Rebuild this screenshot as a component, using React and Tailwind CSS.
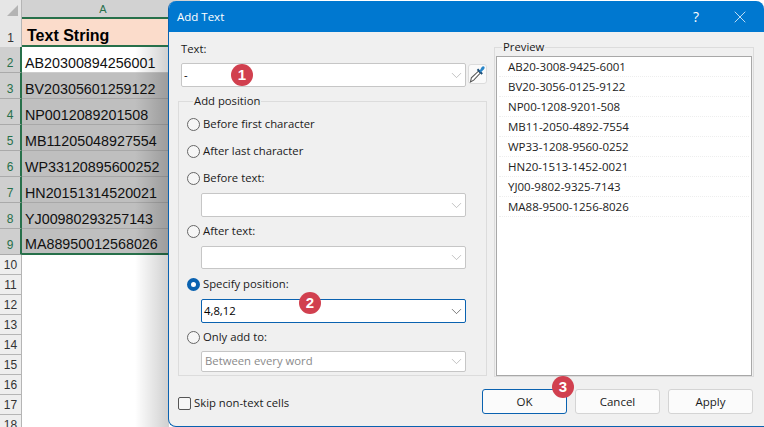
import { ChevronDown, X } from 'lucide-react'

const CELLS = ['AB20300894256001', 'BV20305601259122', 'NP0012089201508', 'MB11205048927554', 'WP33120895600252', 'HN20151314520021', 'YJ00980293257143', 'MA88950012568026']
const PREVIEW = ['AB20-3008-9425-6001', 'BV20-3056-0125-9122', 'NP00-1208-9201-508', 'MB11-2050-4892-7554', 'WP33-1208-9560-0252', 'HN20-1513-1452-0021', 'YJ00-9802-9325-7143', 'MA88-9500-1256-8026']
const EMPTY_ROWS = [10, 11, 12, 13, 14, 15, 16, 17, 18]

function Badge({ n, className }) {
  return (
    <span className={`absolute z-10 flex h-[22px] w-[22px] items-center justify-center rounded-full bg-[#d1404f] text-[15px] font-bold text-white font-['Liberation_Sans',sans-serif] ${className}`}>
      {n}
    </span>
  )
}

function Radio({ label, checked, className = '' }) {
  return (
    <label className={`flex h-[16px] items-center gap-[3px] ${className}`}>
      {checked
        ? <span className="h-[13px] w-[13px] rounded-full border-[4px] border-[#0a62b0] bg-white" />
        : <span className="h-[13px] w-[13px] rounded-full border border-[#666] bg-[#f6f6f6]" />}
      <span>{label}</span>
    </label>
  )
}

function Combo({ value, className = '', active, muted }) {
  return (
    <div className={`flex items-center justify-between rounded-[2px] border bg-white pl-[2px] ${active ? 'border-[#0a62b0]' : 'border-[#c6c6c6]'} ${className}`}>
      <span className={muted ? 'pl-[1px] text-[#8a8a8a]' : 'text-black'}>{value}</span>
      <ChevronDown size={17} strokeWidth={0.9} className={active ? 'text-[#333]' : 'text-[#a0a0a0]'} />
    </div>
  )
}

function DialogButton({ label, primary }) {
  return (
    <button className={`h-[25px] w-[85px] rounded-[3px] border bg-[#fbfbfb] text-[11.5px] ${primary ? 'border-[#0a62b0]' : 'border-[#d4d4d4]'}`}>
      {label}
    </button>
  )
}

function Dropper() {
  return (
    <svg width="19" height="20" viewBox="0 0 18 20" fill="none">
      <path d="M1.5 18.5 L2.5 14 L10 7 L12 9 L5 16.5 Z" fill="#fff" stroke="#555" strokeWidth="1.1" />
      <path d="M9 5 L14 10" stroke="#1b4f7a" strokeWidth="2" />
      <path d="M11 7 L13.5 2.5 Q15 1 16.3 2.2 Q17.2 3.5 15.8 5 L12.5 8.5 Z" fill="#2a86c8" />
    </svg>
  )
}

export default function App() {
  return (
    <div className="relative h-[427px] w-[764px] overflow-hidden bg-white font-['Liberation_Sans',sans-serif]">
      {/* sheet behind the dialog */}
      <div className="w-[200px]">
        <div className="flex h-[19px] bg-[#e6e6e6]">
          <div className="relative w-[22px] border-r border-[#b5b5b5]">
            <span className="absolute bottom-[3px] right-[3px] h-0 w-0 border-b-[11px] border-l-[11px] border-b-[#b4b4b4] border-l-transparent" />
          </div>
          <div className="flex flex-1 justify-center border-b-2 border-[#27704a] bg-[#d2d2d2] pr-[16px] text-[11px] leading-[18px] text-[#27704a]">A</div>
        </div>
        <div className="flex h-[28px]">
          <div className="flex w-[22px] items-end justify-center border-r border-[#b5b5b5] bg-[#e6e6e6] text-[12px] text-[#333]">1</div>
          <div className="flex-1 border-b-2 border-[#27704a] bg-[#fbdccb] pl-[5px] pt-[8px] text-[16px] font-bold leading-[18px] text-black">Text String</div>
        </div>
        {CELLS.map((c, i) => (
          <div key={c} className="flex h-[26px]">
            <div className="flex w-[22px] items-end justify-center border-b border-r-2 border-b-[#aaa] border-r-[#27704a] bg-[#cfcfcf] pb-[1px] text-[12px] leading-[16px] text-[#27704a]">{i + 2}</div>
            <div className={`flex flex-1 items-end border-b pl-[3px] text-[14.3px] leading-[17px] text-[#111] ${i === 0 ? 'border-b-[#ccc] bg-white' : i === 7 ? 'border-b-2 border-b-[#27704a] bg-[#bfbfbf]' : 'border-b-[#a8a8a8] bg-[#bfbfbf]'}`}>{c}</div>
          </div>
        ))}
        {EMPTY_ROWS.map(n => (
          <div key={n} className="flex h-[20px]">
            <div className="flex w-[22px] items-center justify-center border-b border-r border-[#b5b5b5] bg-[#eeeeee] text-[12px] text-[#333]">{n}</div>
            <div className="flex-1 bg-white" />
          </div>
        ))}
      </div>
      <div className="absolute left-[135px] top-[47px] h-[380px] w-[34px] bg-gradient-to-r from-transparent to-[#00000030]" />

      {/* Add Text dialog */}
      <div className="absolute left-[168px] top-[1px] h-[426px] w-[596px] overflow-hidden rounded-t-[8px] rounded-bl-[8px] border-b border-l border-[#0a62b0] bg-[#f0f0f0] font-['Open_Sans',sans-serif] text-[11.3px] text-[#1a1a1a]">
        <div className="flex h-[31px] items-center justify-between bg-[#0078d0] pl-[8px] pr-[14px] text-[11.5px] text-white">
          <span>Add Text</span>
          <div className="flex items-center gap-[31px]">
            <span className="text-[14px]">?</span>
            <X size={20} strokeWidth={0.9} />
          </div>
        </div>

        <div className="flex pl-[9px] pr-[10px] pt-[8px]">
          <div className="w-[309px]">
            <div className="pl-[3px] leading-[17px]">Text:</div>
            <div className="relative mt-[6px] flex gap-[2px] pl-[3px]">
              <Combo value="-" className="h-[24px] w-[285px] border-[#8c8c8c]" />
              <Badge n="1" className="left-[53px] top-[1px]" />
              <div className="mt-[1px] flex h-[20px] w-[19px] items-center justify-center rounded-[3px] border border-[#dcdcdc] bg-[#fafafa]">
                <Dropper />
              </div>
            </div>

            <fieldset className="relative mt-[7px] h-[282px] border border-[#dcdcdc] pl-[8px] pt-[8px]">
              <legend className="ml-[6px] px-[1px] leading-[14px]">Add position</legend>
              <Radio label="Before first character" />
              <Radio label="After last character" className="mt-[11px]" />
              <Radio label="Before text:" className="mt-[11px]" />
              <Combo value="" className="ml-[14px] mt-[7px] h-[24px] w-[265px]" />
              <Radio label="After text:" className="mt-[6px]" />
              <Combo value="" className="ml-[14px] mt-[7px] h-[23px] w-[265px]" />
              <Radio label="Specify position:" checked className="mt-[7px]" />
              <Combo value="4,8,12" active className="ml-[14px] mt-[7px] h-[24px] w-[265px]" />
              <Badge n="2" className="left-[120px] top-[184px]" />
              <Radio label="Only add to:" className="mt-[6px]" />
              <Combo value="Between every word" muted className="ml-[14px] mt-[6px] h-[21px] w-[265px]" />
            </fieldset>
          </div>

          <div className="ml-[7px] flex-1">
            <fieldset className="h-[337px] border border-[#dcdcdc] px-[1px]">
              <legend className="ml-[6px] px-[1px] leading-[14px]">Preview</legend>
              <div className="mt-[2px] h-[320px] border border-[#a8a8a8] bg-white">
                {PREVIEW.map(p => (
                  <div key={p} className="mx-[2px] h-[20px] border-b border-dotted border-[#eeeeee] pl-[9px] text-[11.5px] leading-[19px] text-[#222]">{p}</div>
                ))}
              </div>
            </fieldset>
          </div>
        </div>

        <div className="relative mt-[12px] flex items-center justify-between pl-[9px] pr-[11px]">
          <label className="flex items-center gap-[3px] pt-[4px]">
            <span className="h-[13px] w-[13px] rounded-[2px] border border-[#555] bg-[#f6f6f6]" />
            Skip non-text cells
          </label>
          <Badge n="3" className="left-[383px] -top-[13px]" />
          <div className="flex gap-[8px]">
            <DialogButton label="OK" primary />
            <DialogButton label="Cancel" />
            <DialogButton label="Apply" />
          </div>
        </div>
      </div>
    </div>
  )
}
